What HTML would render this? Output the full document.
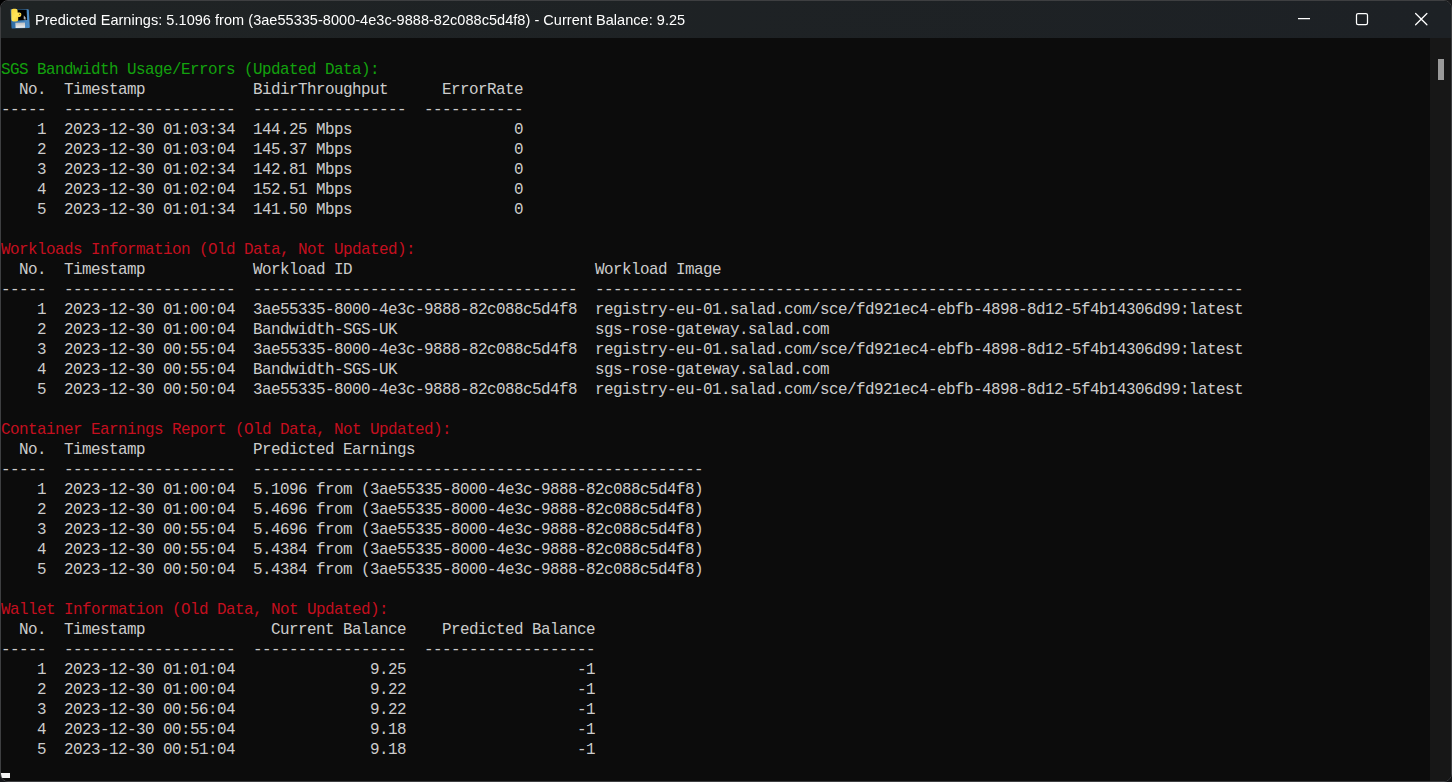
<!DOCTYPE html>
<html lang="en">
<head>
<meta charset="utf-8">
<title>Predicted Earnings: 5.1096 from (3ae55335-8000-4e3c-9888-82c088c5d4f8) - Current Balance: 9.25</title>
<style>
html,body{margin:0;padding:0;}
body{width:1452px;height:782px;overflow:hidden;background:#000;position:relative;}
#corners{position:absolute;left:0;top:0;width:1452px;height:782px;
  background:
   linear-gradient(#000,#000) 0 0/12px 12px no-repeat,
   linear-gradient(#1a1a1c,#1a1a1c) 100% 0/12px 12px no-repeat,
   linear-gradient(#15171a,#15171a) 0 100%/12px 12px no-repeat,
   linear-gradient(#121316,#121316) 100% 100%/12px 12px no-repeat;}
#win{position:absolute;left:0;top:0;width:1450px;height:780px;border:1px solid #3e3f41;border-radius:8px;overflow:hidden;background:#0c0c0c;}
#titlebar{position:absolute;left:0;top:0;width:1450px;height:37px;background:linear-gradient(90deg,#1f2324,#1d2125);}
#title{position:absolute;left:34px;top:1px;will-change:transform;height:37px;line-height:37px;color:#fff;white-space:nowrap;
  font-family:"Liberation Sans",sans-serif;font-size:14.5px;letter-spacing:0.04px;}
#icon{position:absolute;left:8px;top:6px;width:24px;height:24px;}
#ctl{position:absolute;left:1290px;top:0;width:160px;height:37px;}
#term{position:absolute;left:0;top:37px;width:1429px;height:743px;background:#0c0c0c;overflow:hidden;}
#text{position:absolute;left:0;top:2px;font-family:"Liberation Mono",monospace;font-size:15.9px;letter-spacing:-0.5359375px;line-height:20px;color:#cccccc;}
#text div{height:20px;white-space:pre;}
#text .g{color:#13a10e;}
#text .r{color:#c50f1f;}
#cursor{position:absolute;left:0;top:735px;width:9px;height:5px;background:#f4f4f4;}
#sb{position:absolute;left:1429px;top:37px;width:21px;height:743px;background:#171717;}
#thumb{position:absolute;left:8px;top:21px;width:6px;height:21px;background:#9a9a9a;}
</style>
</head>
<body>
<div id="corners"></div>
<div id="win">
 <div id="titlebar">
  <svg id="icon" viewBox="0 0 24 24">
   <defs>
    <linearGradient id="ib" x1="0" y1="0" x2="1" y2="0"><stop offset="0" stop-color="#2c6aa3"/><stop offset="1" stop-color="#4f8fc9"/></linearGradient>
    <linearGradient id="il" x1="0" y1="0" x2="0" y2="1"><stop offset="0" stop-color="#b9bcc0"/><stop offset="1" stop-color="#eef0f2"/></linearGradient>
    <linearGradient id="iy" x1="0" y1="0" x2="1" y2="1"><stop offset="0" stop-color="#ffd43b"/><stop offset="0.5" stop-color="#ffe75a"/><stop offset="1" stop-color="#f5c22a"/></linearGradient>
    <filter id="blur" x="-10%" y="-10%" width="120%" height="120%"><feGaussianBlur stdDeviation="0.35"/></filter>
   </defs>
   <g filter="url(#blur)">
    <path d="M1.4 2.8 Q1.3 1.9 2.3 1.9 L18.9 2.2 Q19.7 2.2 19.8 3 L20.8 20 Q20.9 21 19.9 21.1 L3.6 21.6 Q2.6 21.6 2.5 20.7 Z" fill="url(#ib)"/>
    <path d="M8 2.4 L17.6 2.7 L18.1 12.9 L8 13.4 Z" fill="#000"/>
    <path d="M6.3 15.8 L16 15.4 L16.1 20.7 L6.6 20.9 Z" fill="url(#il)"/>
    <path d="M2.2 3.4 Q2.2 1.6 4.6 1.7 L6.4 1.7 Q8.6 1.7 8.6 3.6 L8.6 5.6 L10.8 5.6 Q12.5 5.8 12.4 7.8 Q12.4 9.9 10.5 9.9 L9.2 9.9 L9.2 12.5 Q9.4 14.4 7 14.4 L4.6 14.4 Q2.4 14.4 2.4 12.4 Z" fill="url(#iy)"/>
    <circle cx="10.7" cy="7.2" r="0.55" fill="#5a4a10"/>
    <path d="M14.8 8.2 L17.3 11.4 L16.2 11.5 L16.6 13.2 L15.8 13.3 L15.4 11.7 L14.7 12.3 Z" fill="#b5b5b5"/>
   </g>
  </svg>
  <div id="title">Predicted Earnings: 5.1096 from (3ae55335-8000-4e3c-9888-82c088c5d4f8) - Current Balance: 9.25</div>
  <svg id="ctl" viewBox="0 0 160 37" fill="none" stroke="#fff" stroke-width="1.25">
   <path d="M7 17.5H19"/>
   <rect x="65.5" y="12.5" width="11" height="11" rx="1.6"/>
   <path stroke-linecap="round" d="M124.6 12.5L135.9 23.8M135.9 12.5L124.6 23.8"/>
  </svg>
 </div>
 <div id="term">
  <div id="text">
<div>&nbsp;</div>
<div class="g">SGS Bandwidth Usage/Errors (Updated Data):</div>
<div>  No.  Timestamp            BidirThroughput      ErrorRate</div>
<div>-----  -------------------  -----------------  -----------</div>
<div>    1  2023-12-30 01:03:34  144.25 Mbps                  0</div>
<div>    2  2023-12-30 01:03:04  145.37 Mbps                  0</div>
<div>    3  2023-12-30 01:02:34  142.81 Mbps                  0</div>
<div>    4  2023-12-30 01:02:04  152.51 Mbps                  0</div>
<div>    5  2023-12-30 01:01:34  141.50 Mbps                  0</div>
<div>&nbsp;</div>
<div class="r">Workloads Information (Old Data, Not Updated):</div>
<div>  No.  Timestamp            Workload ID                           Workload Image</div>
<div>-----  -------------------  ------------------------------------  ------------------------------------------------------------------------</div>
<div>    1  2023-12-30 01:00:04  3ae55335-8000-4e3c-9888-82c088c5d4f8  registry-eu-01.salad.com/sce/fd921ec4-ebfb-4898-8d12-5f4b14306d99:latest</div>
<div>    2  2023-12-30 01:00:04  Bandwidth-SGS-UK                      sgs-rose-gateway.salad.com</div>
<div>    3  2023-12-30 00:55:04  3ae55335-8000-4e3c-9888-82c088c5d4f8  registry-eu-01.salad.com/sce/fd921ec4-ebfb-4898-8d12-5f4b14306d99:latest</div>
<div>    4  2023-12-30 00:55:04  Bandwidth-SGS-UK                      sgs-rose-gateway.salad.com</div>
<div>    5  2023-12-30 00:50:04  3ae55335-8000-4e3c-9888-82c088c5d4f8  registry-eu-01.salad.com/sce/fd921ec4-ebfb-4898-8d12-5f4b14306d99:latest</div>
<div>&nbsp;</div>
<div class="r">Container Earnings Report (Old Data, Not Updated):</div>
<div>  No.  Timestamp            Predicted Earnings</div>
<div>-----  -------------------  --------------------------------------------------</div>
<div>    1  2023-12-30 01:00:04  5.1096 from (3ae55335-8000-4e3c-9888-82c088c5d4f8)</div>
<div>    2  2023-12-30 01:00:04  5.4696 from (3ae55335-8000-4e3c-9888-82c088c5d4f8)</div>
<div>    3  2023-12-30 00:55:04  5.4696 from (3ae55335-8000-4e3c-9888-82c088c5d4f8)</div>
<div>    4  2023-12-30 00:55:04  5.4384 from (3ae55335-8000-4e3c-9888-82c088c5d4f8)</div>
<div>    5  2023-12-30 00:50:04  5.4384 from (3ae55335-8000-4e3c-9888-82c088c5d4f8)</div>
<div>&nbsp;</div>
<div class="r">Wallet Information (Old Data, Not Updated):</div>
<div>  No.  Timestamp              Current Balance    Predicted Balance</div>
<div>-----  -------------------  -----------------  -------------------</div>
<div>    1  2023-12-30 01:01:04               9.25                   -1</div>
<div>    2  2023-12-30 01:00:04               9.22                   -1</div>
<div>    3  2023-12-30 00:56:04               9.22                   -1</div>
<div>    4  2023-12-30 00:55:04               9.18                   -1</div>
<div>    5  2023-12-30 00:51:04               9.18                   -1</div>
  </div>
  <div id="cursor"></div>
 </div>
 <div id="sb"><div id="thumb"></div></div>
</div>
</body>
</html>
